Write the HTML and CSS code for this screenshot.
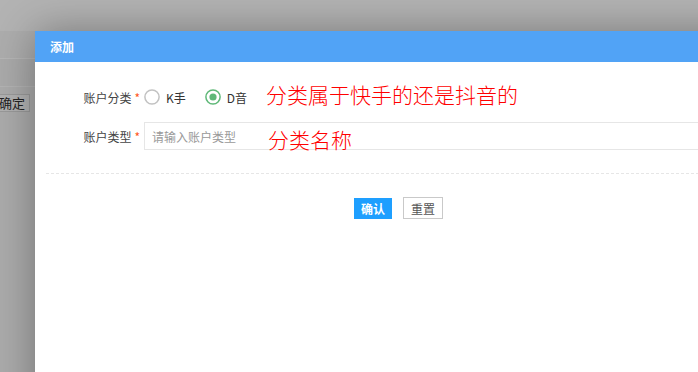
FILE: index.html
```html
<!DOCTYPE html>
<html lang="zh-CN">
<head>
    <meta charset="UTF-8">
    <title>添加</title>
    <link rel="stylesheet" href="styles.css">
</head>
<body>
    <div class="page">
        <div class="page-top"></div>
        <div class="page-tabs"></div>
        <div class="page-tools"></div>
        <div class="page-main">
            <span class="page-btn">确定</span>
        </div>
    </div>

    <div class="dialog">
        <div class="dialog-title">添加</div>
        <div class="dialog-body">
            <div class="form-item">
                <label class="form-label">账户分类<span class="req">*</span></label>
                <div class="radio-group">
                    <span class="radio">
                        <svg width="16" height="16" viewBox="0 0 16 16"><circle cx="8" cy="8" r="7.1" fill="none" stroke="#c2c2c2" stroke-width="1.5"/></svg>
                        K手
                    </span>
                    <span class="radio checked">
                        <svg width="16" height="16" viewBox="0 0 16 16"><circle cx="8" cy="8" r="7.1" fill="none" stroke="#5fb878" stroke-width="1.5"/><circle cx="8" cy="8" r="3.6" fill="#5fb878"/></svg>
                        D音
                    </span>
                </div>
                <span class="note">分类属于快手的还是抖音的</span>
            </div>
            <div class="form-item">
                <label class="form-label">账户类型<span class="req">*</span></label>
                <div class="input-wrap">
                    <input class="input" type="text" placeholder="请输入账户类型">
                    <span class="note note-over">分类名称</span>
                </div>
            </div>
            <div class="divider"></div>
            <div class="actions">
                <button class="btn btn-primary">确认</button>
                <button class="btn">重置</button>
            </div>
        </div>
    </div>
</body>
</html>
```

FILE: styles.css
```css
body {
    margin: 0;
    width: 698px;
    height: 372px;
    overflow: hidden;
    position: relative;
    background: #a9a9a9;
    font-family: "Noto Sans CJK SC", "Noto Sans", sans-serif;
    font-size: 12px;
}

/* page behind the mask */
.page-top {
    height: 31px;
    background: #b3b3b3;
}

.page-tabs {
    height: 27px;
    background: #adadad;
    border-bottom: 1px solid #b6b6b6;
}

.page-tools {
    height: 27px;
    background: #aaaaaa;
    border-bottom: 1px solid #b3b3b3;
}

.page-main {
    padding-top: 7px;
    background: #ababab;
    height: 300px;
}

.page-btn {
    display: inline-block;
    margin-left: -8px;
    height: 16px;
    line-height: 16px;
    padding: 0 0 0 6px;
    width: 30px;
    border: 1px solid #999;
    background: #b1b1b1;
    color: #222;
    font-size: 13px;
}

/* dialog */
.dialog {
    position: absolute;
    left: 35px;
    top: 31px;
    width: 727px;
    height: 400px;
    background: #fff;
    box-shadow: 1px 1px 40px rgba(0, 0, 0, 0.35);
}

.dialog-title {
    height: 31px;
    line-height: 31px;
    padding-left: 15px;
    background: #51a3f6;
    color: #fff;
    font-size: 12px;
    font-weight: bold;
}

.dialog-body {
    padding: 21px 11px 0;
}

.form-item {
    display: flex;
    align-items: center;
    height: 28px;
    margin-bottom: 11px;
}

.form-label {
    width: 94px;
    padding-right: 4px;
    text-align: right;
    color: #444;
}

.req {
    color: #ff5722;
    margin-left: 3px;
}

.radio-group {
    display: flex;
    align-items: center;
}

.radio {
    display: flex;
    align-items: center;
    gap: 6px;
    margin-right: 19px;
    color: #333;
}

.note {
    color: #ff0000;
    font-size: 21px;
    font-weight: 300;
    line-height: 1;
    margin-bottom: 5px;
}

.input-wrap {
    position: relative;
    flex: 1;
}

.input {
    display: block;
    box-sizing: border-box;
    width: 100%;
    height: 28px;
    border: 1px solid #e6e6e6;
    padding: 0 7px;
    font-family: inherit;
    font-size: 12px;
    outline: none;
}

.input::placeholder {
    color: #999;
}

.note-over {
    position: absolute;
    left: 124px;
    top: 7px;
    margin-bottom: 0;
}

.divider {
    margin-top: 23px;
    height: 1px;
    background: repeating-linear-gradient(to right, #e6e6e6 0 3px, transparent 3px 5px);
}

.actions {
    display: flex;
    justify-content: center;
    align-items: center;
    gap: 11px;
    margin-top: 23px;
}

.btn {
    height: 22px;
    padding: 0 7px;
    border: 1px solid #c9c9c9;
    background: #fff;
    color: #555;
    font-family: inherit;
    font-size: 12px;
    cursor: pointer;
}

.btn-primary {
    height: 21px;
    padding: 0 7px;
    border: none;
    background: #1e9fff;
    color: #fff;
    font-weight: bold;
}
```
